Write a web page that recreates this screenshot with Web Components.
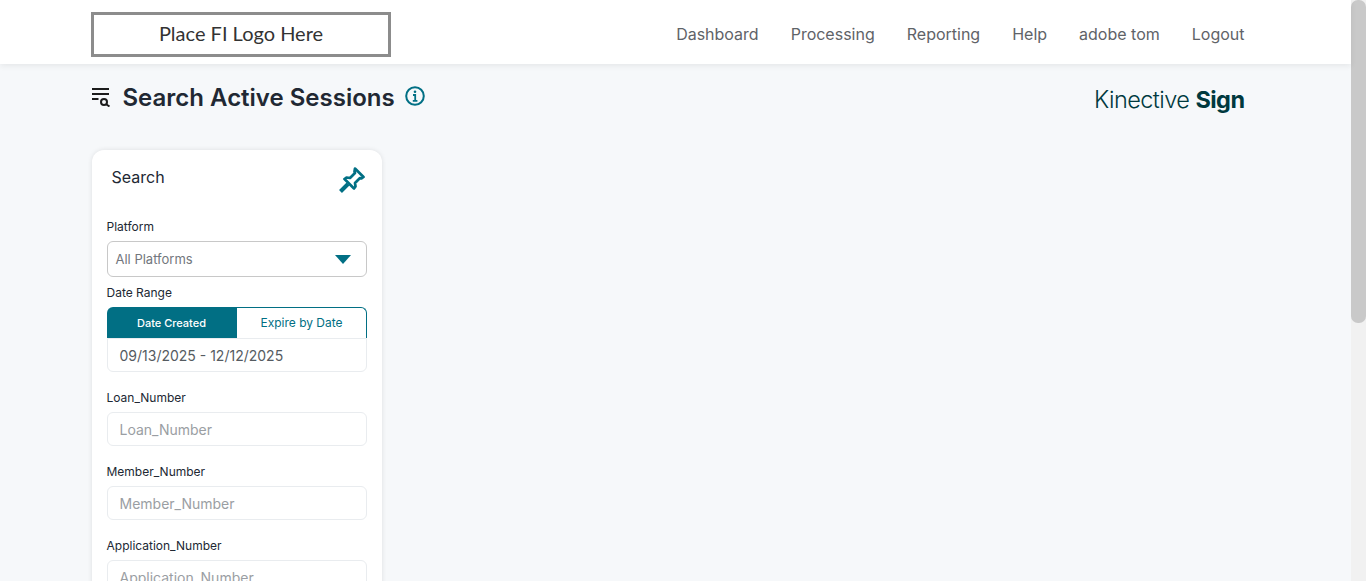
<!doctype html>
<html lang="en"><head><meta charset="utf-8"><title>Search Active Sessions</title>
<style>
html,body{margin:0;height:100%;overflow:hidden;background:#f6f8fa;font-family:Inter,"Liberation Sans",sans-serif}
</style></head><body>
<app-shell>
  <app-header slot="header"></app-header>
  <page-title></page-title>
  <search-card>
    <form-field label="Platform"><select-box text="All Platforms"></select-box></form-field>
    <form-field label="Date Range"><date-range></date-range></form-field>
    <form-field label="Loan_Number"><text-box text="Loan_Number"></text-box></form-field>
    <form-field label="Member_Number"><text-box text="Member_Number"></text-box></form-field>
    <form-field label="Application_Number"><text-box text="Application_Number"></text-box></form-field>
  </search-card>
</app-shell>
<script>
const def=(name,html)=>customElements.define(name,class extends HTMLElement{
  connectedCallback(){ if(this.shadowRoot)return;
    const a=n=>this.getAttribute(n)||'';
    this.attachShadow({mode:'open'}).innerHTML=typeof html==='function'?html(a):html;
  }
});
def('app-shell',`<style>
:host{display:flex;height:581px;overflow:hidden}
.main{flex:1;min-width:0;display:flex;flex-direction:column}
.body{padding:0 106.5px 0 91.5px}
.bar{width:15px;background:#f1f1f1;flex:none}
.thumb{height:323px;background:#c9c9c9;border-radius:7px}
</style><div class="main"><slot name="header"></slot><div class="body"><slot></slot></div></div>
<div class="bar"><div class="thumb"></div></div>`);
def('app-header',`<style>
:host{display:flex;align-items:center;justify-content:space-between;height:64px;background:#fff;padding:0 106.5px 0 91px;box-shadow:0 2px 6px rgba(0,0,0,.07);position:relative;z-index:1;flex:none}
.logo{box-sizing:border-box;width:300px;height:45px;margin-top:5px;border:3px solid #8c8c8c;padding-bottom:4px;display:flex;align-items:center;justify-content:center;font:400 20px Lato,sans-serif;color:#333}
nav{display:flex;gap:32px;font-size:16px;color:#5f6368;margin-top:3px}
</style><div class="logo">Place FI Logo Here</div>
<nav><span>Dashboard</span><span>Processing</span><span>Reporting</span><span>Help</span><span>adobe tom</span><span>Logout</span></nav>`);
def('page-title',`<style>
:host{display:flex;align-items:flex-start;height:86px;margin-left:-1px}
.ico{margin-top:23px;width:20px;height:20px;flex:none}
h1{margin:19px 0 0 12px;font-size:24px;line-height:30px;font-weight:600;color:#212833}
.info{margin:22px 0 0 10px;width:20px;height:20px;flex:none}
.brand{margin-left:auto;margin-top:21px;font-size:23.5px;line-height:30px;font-weight:300;color:#00393e;letter-spacing:-.55px}
b{font-weight:700;letter-spacing:-.55px}
</style>
<svg class="ico" viewBox="0 0 20 20" fill="none" stroke="#1c1c1c" stroke-width="1.9"><path d="M1 2h17M1 7h17M1 12h6.5"/><circle cx="13" cy="15" r="3" stroke-width="2"/><path d="M15.2 17.2l3.3 2.3" stroke-width="2"/></svg>
<h1>Search Active Sessions</h1>
<svg class="info" viewBox="0 0 20 20" fill="none" stroke="#016f84"><circle cx="10" cy="10" r="8.8" stroke-width="2"/><circle cx="10" cy="5.8" r="1.3" fill="#016f84" stroke="none"/><path d="M8 9h2.2v5.5M7.8 14.8h4.6" stroke-width="1.8"/></svg>
<div class="brand">Kinective <b>Sign</b></div>`);
def('search-card',`<style>
:host{display:block;width:290px;box-sizing:border-box;background:#fff;border-radius:12px;box-shadow:0 0 5px rgba(0,0,0,.1);padding:0 15px 20px;height:600px}
.h{display:flex;justify-content:space-between;align-items:flex-start;height:69px;padding:0 2px 0 5px}
.t{font-size:16px;line-height:20px;margin-top:17px;color:#212833}
svg{margin-top:17px;width:26px;height:26px}
</style><div class="h"><span class="t">Search</span>
<svg viewBox="0 0 26 26" fill="none" stroke="#016f84" stroke-width="2.7" stroke-linejoin="round"><path d="M16 1.5l8.5 8.5-2 1.5-1.5-.5-5 5 .5 3.5-1.5 2-9.5-9.5 2-1.5 3.5.5 5-5-.5-1.5z"/><path d="M9 17L1.5 24.5" stroke-width="4"/></svg></div><slot></slot>`);
def('form-field',a=>`<style>
:host{display:block}
label{display:block;font-size:12px;line-height:16px;color:#212833;margin-bottom:6px}
</style><label>${a('label')}</label><slot></slot>`);
def('select-box',a=>`<style>
:host{display:flex;align-items:center;justify-content:space-between;box-sizing:border-box;height:36px;margin-bottom:8px;border:1px solid #c8c8c8;border-radius:6px;padding:0 15px 0 8px;font-size:13px;color:#72777d}
i{width:0;height:0;border:8px solid transparent;border-top:9px solid #016f84;border-bottom:0}
</style><span>${a('text')}</span><i></i>`);
def('date-range',`<style>
:host{display:block;margin-bottom:18px}
.tabs{display:flex;height:31px;font-size:12px}
.tabs div{width:130px;display:flex;align-items:center;justify-content:center;box-sizing:border-box}
.on{background:#016f84;color:#fff;font-size:11px;font-weight:500;border-radius:6px 0 0 0;padding-top:1px}
.off{color:#016f84;border:solid #016f84;border-width:1px 1px 0 0;border-radius:0 6px 0 0;padding:0 0 2px 1px}
.val{box-sizing:border-box;height:34px;border:1px solid #e9ecef;border-radius:0 0 6px 6px;display:flex;align-items:center;padding:1px 0 0 12px;font-size:14px;color:#555b61}
</style><div class="tabs"><div class="on">Date Created</div><div class="off">Expire by Date</div></div><div class="val">09/13/2025 - 12/12/2025</div>`);
def('text-box',a=>`<style>
:host{display:flex;align-items:center;box-sizing:border-box;height:34px;margin-bottom:18px;border:1px solid #e9ecef;border-radius:6px;padding-left:12px;font-size:14px;color:#9a9ea3}
</style>${a('text')}`);
</script>
</body></html>
